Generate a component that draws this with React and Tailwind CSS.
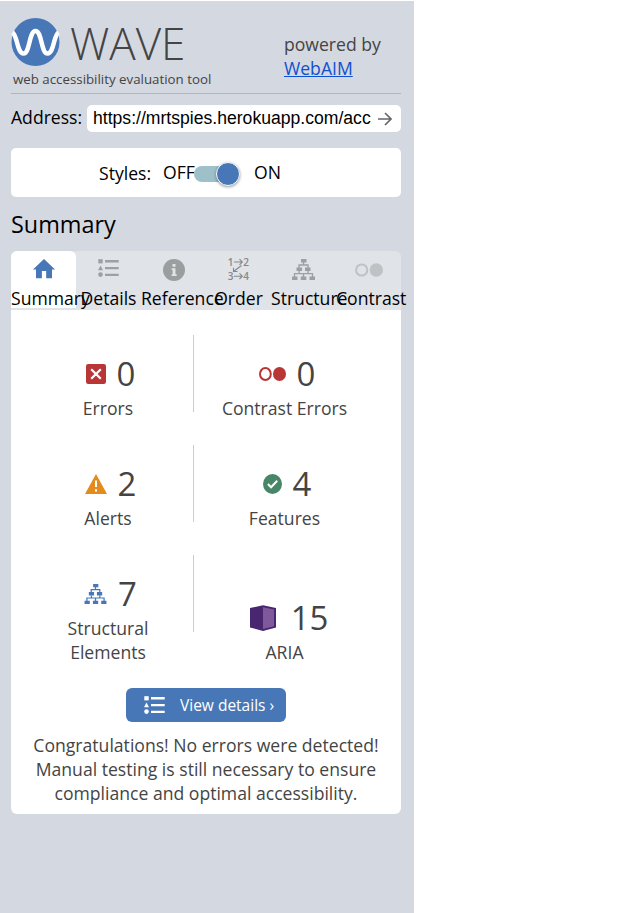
import React from "react";

function ListIcon({ className }) {
  return (
    <svg viewBox="0 0 21 18" className={className} fill="currentColor">
      <rect x="0.3" y="0.2" width="4.4" height="4.2" />
      <path d="M2.5 6.6 5 11.3H0z" />
      <circle cx="2.5" cy="15.6" r="2.3" />
      <path d="M7 1h13.7v2.4H7zM7 7.9h13.7v2.4H7zM7 14.7h13.7v2.4H7z" />
    </svg>
  );
}

function StructureIcon({ className }) {
  return (
    <svg viewBox="0 0 23 21" className={className} fill="currentColor">
      <path d="M9 0h5.5v3.5H9zM4.5 8.5H10V12H4.5zM13 8.5h5.5V12H13zM0 17.5h5.5V21H0zM8.8 17.5h5.5V21H8.8zM17.500 17.500H23V21h-5.500z" />
      <path
        d="M11.500 3v3M7 9V6h9v3M7.200 12v2.700M16 12v2.700M2.500 18v-3.300h18V18M11.500 14.700V18"
        fill="none"
        stroke="currentColor"
        strokeWidth="1.3"
      />
    </svg>
  );
}

function OrderIcon({ className }) {
  return (
    <svg viewBox="0 0 22 22" className={className} overflow="visible" fill="currentColor">
      <g fontFamily="Open Sans, sans-serif" fontWeight="600" fontSize="10">
        <text x="-0.3" y="7.5">1</text>
        <text x="15.3" y="7.5">2</text>
        <text x="-0.3" y="21.7">3</text>
        <text x="15.3" y="21.7">4</text>
      </g>
      <path
        d="M6 4h8M11.500 1.200 14.300 4l-2.800 2.800M6 18.200h8M11.500 15.400l2.800 2.800-2.800 2.800M13.500 7.500 5.500 13.500M5.500 9.800v3.700h4"
        fill="none"
        stroke="currentColor"
        strokeWidth="1.1"
      />
    </svg>
  );
}

const tabs = [
  {
    label: "Summary",
    active: true,
    icon: (
      <svg viewBox="0 0 22 20" className="mt-2 h-5 w-[22px] text-[#4777b7]" fill="currentColor">
        <path d="M11 0 22 10.5H19V19.3H13.2V12H8.9V19.3H3V10.5H0z" />
      </svg>
    ),
  },
  { label: "Details", icon: <ListIcon className="mt-2 h-[18px] w-[21px] text-[#9d9fa1]" /> },
  {
    label: "Reference",
    icon: (
      <svg viewBox="0 0 22 22" className="mt-2 size-[22px]">
        <circle cx="11" cy="11" r="11" fill="#9b9d9f" />
        <path d="M9.5 5h3v2.7h-3zM8.6 9.2h3.9v6h1.2v1.7H8.6v-1.7h1v-4.3h-1z" fill="#e0e3e8" />
      </svg>
    ),
  },
  { label: "Order", icon: <OrderIcon className="mt-[7px] size-[22px] text-[#85888b]" /> },
  { label: "Structure", icon: <StructureIcon className="mt-2 h-[21px] w-[23px] text-[#9d9fa1]" /> },
  {
    label: "Contrast",
    icon: (
      <svg viewBox="0 0 28 14" className="mt-3 h-3.5 w-7 text-[#bfc2c5]">
        <circle cx="6.7" cy="7" r="5.6" fill="none" stroke="currentColor" strokeWidth="2" />
        <circle cx="21.3" cy="7" r="6.7" fill="currentColor" />
      </svg>
    ),
  },
];

const ErrorIcon = (
  <svg viewBox="0 0 20 20" className="size-5">
    <rect width="20" height="20" rx="2.2" fill="#b93637" />
    <path d="m5.2 5.2 9.6 9.6M14.8 5.2l-9.6 9.6" stroke="#fff" strokeWidth="2.2" />
  </svg>
);
const ContrastIcon = (
  <svg viewBox="0 0 27 14" className="h-3.5 w-[27px]">
    <ellipse cx="6.4" cy="7" rx="5.4" ry="6" fill="none" stroke="#b93637" strokeWidth="2" />
    <ellipse cx="20.5" cy="7" rx="6.5" ry="7" fill="#b93637" />
  </svg>
);
const AlertIcon = (
  <svg viewBox="0 0 22 20" className="h-5 w-[22px]">
    <path d="M11 0 22 20H0z" fill="#e38b1c" />
    <path d="M10 6.5h2V13h-2zM10 15.3h2v2.2h-2z" fill="#fff" />
  </svg>
);
const FeatureIcon = (
  <svg viewBox="0 0 20 20" className="h-5 w-[19px]" preserveAspectRatio="none">
    <circle cx="10" cy="10" r="10" fill="#478768" />
    <path d="m5.2 10 3.3 3.3 6.5-6.5" fill="none" stroke="#fff" strokeWidth="2.2" />
  </svg>
);
const AriaIcon = (
  <svg viewBox="0 0 26 26" className="size-[26px]">
    <path d="M0 3 13 0.2 26 3v19.5L13 26 0 22.5z" fill="#482770" />
    <path d="M13 2.3 24 4.5v16.8L13 24z" fill="#80599b" />
  </svg>
);

const stats = [
  [
    { icon: ErrorIcon, count: "0", label: "Errors" },
    { icon: ContrastIcon, count: "0", label: "Contrast Errors" },
  ],
  [
    { icon: AlertIcon, count: "2", label: "Alerts" },
    { icon: FeatureIcon, count: "4", label: "Features" },
  ],
  [
    {
      icon: <StructureIcon className="h-5 w-[23px] text-[#4777b7]" />,
      count: "7",
      label: "Structural Elements",
    },
    { icon: AriaIcon, count: "15", label: "ARIA", low: true },
  ],
];

function Stat({ icon, count, label, low }) {
  return (
    <div className={low ? "pt-11" : "pt-5"}>
      <div
        className={
          low
            ? "flex h-[41px] items-start justify-center gap-[15px] pl-[9px]"
            : "flex h-[41px] items-start justify-center gap-[11px] pl-[5px]"
        }
      >
        <span className="flex h-[37px] items-center">{icon}</span>
        <span className="text-[33px] leading-[37px]">{count}</span>
      </div>
      <div className="text-center">
        <div className={label === "Structural Elements" ? "mx-auto w-[100px]" : "whitespace-nowrap"}>{label}</div>
      </div>
    </div>
  );
}

export default function App() {
  return (
    <div className="h-[913px] w-[620px] overflow-hidden bg-white pt-px font-['Open_Sans',sans-serif] text-[17.6px] leading-6 text-black">
      <div className="h-[912px] w-[414px] bg-[#d4d8e0] pl-[11px] pr-[13px]">
        <header className="flex h-[93px] border-b border-[#b1b4ba] text-[#444]">
          <div className="w-[273px] pt-4">
            <div className="flex h-[49px] items-center">
              <svg viewBox="0 -0.5 49 49" className="size-[49px]">
                <circle cx="24.5" cy="24.5" r="24" fill="#4777b7" />
                <path
                  d="M1.500 15C6.500 18 6 36 12.500 36S18 13.500 24.500 13.500 30 36 36.500 36 42.500 18 47.500 15"
                  fill="none"
                  stroke="#fff"
                  strokeWidth="4.500"
                />
              </svg>
              <span className="pl-[10px] pt-[3px] text-[44px] font-light leading-[49px]">WAVE</span>
            </div>
            <div className="pl-[2px] pt-px text-[13.3px] leading-6">web accessibility evaluation tool</div>
          </div>
          <div className="pt-[31px]">
            <div>powered by</div>
            <a className="text-[#0f50d0] underline">WebAIM</a>
          </div>
        </header>

        <div className="flex h-[54px] pt-[11px]">
          <label className="w-[76px] whitespace-nowrap">Address:</label>
          <div className="flex h-[27px] w-[314px] items-center rounded-[5px] bg-white pl-1.5">
            <div className="w-[278px] overflow-hidden whitespace-nowrap font-['Liberation_Sans',Arial,sans-serif] text-[17.6px] leading-[27px]">
              https://mrtspies.herokuapp.com/acc
            </div>
            <svg viewBox="0 0 14 14" className="ml-[7px] mt-px size-3.5" fill="none" stroke="#666" strokeWidth="1.6">
              <path d="M0 7h12.7M7 1l6 6-6 6" />
            </svg>
          </div>
        </div>

        <div className="flex h-[49px] items-center rounded-[5px] bg-white">
          <span className="box-content w-16 pl-[88px] pt-px">Styles:</span>
          <span className="w-[31px] whitespace-nowrap pb-px">OFF</span>
          <span className="mt-[2px] flex h-4 w-[46px] items-center justify-end rounded-full bg-[#9dc0c9]">
            <span className="size-6 shrink-0 rounded-full border border-white bg-[#4777b7] shadow-[0_1px_3px_rgba(0,0,0,0.4)]" />
          </span>
          <span className="ml-[14px] pb-px">ON</span>
        </div>

        <h2 className="h-[54px] pt-[11px] text-[23.4px] leading-8">Summary</h2>

        <div className="flex h-[59px] rounded-t-md bg-[#e0e3e8]">
          {tabs.map((t) => (
            <div
              key={t.label}
              className={t.active ? "h-[57px] w-[65px] shrink-0 rounded-t-md bg-white" : "h-[57px] w-[65px] shrink-0"}
            >
              <div className="flex h-[35px] justify-center">{t.icon}</div>
              <div className="whitespace-nowrap text-center">{t.label}</div>
            </div>
          ))}
        </div>

        <main className="h-[504px] rounded-b-md bg-white pt-[25px] text-[#444]">
          {stats.map((row, i) => (
            <div key={i} className="flex h-[110px] pl-3">
              <div className="h-[77px] w-[171px] border-r border-[#ccc]">
                <Stat {...row[0]} />
              </div>
              <div className="w-[181px]">
                <Stat {...row[1]} />
              </div>
            </div>
          ))}
          <div className="mx-auto mt-[23px] flex h-[34px] w-[160px] items-center rounded-[6px] bg-[#4777b7] pl-[18px] text-[15.5px] text-white">
            <ListIcon className="h-[18px] w-[21px]" />
            <span className="whitespace-nowrap pb-px pl-[15px]">View details ›</span>
          </div>
          <p className="mt-[11px] text-center">
            Congratulations! No errors were detected!
            <br />
            Manual testing is still necessary to ensure
            <br />
            compliance and optimal accessibility.
          </p>
        </main>
      </div>
    </div>
  );
}
